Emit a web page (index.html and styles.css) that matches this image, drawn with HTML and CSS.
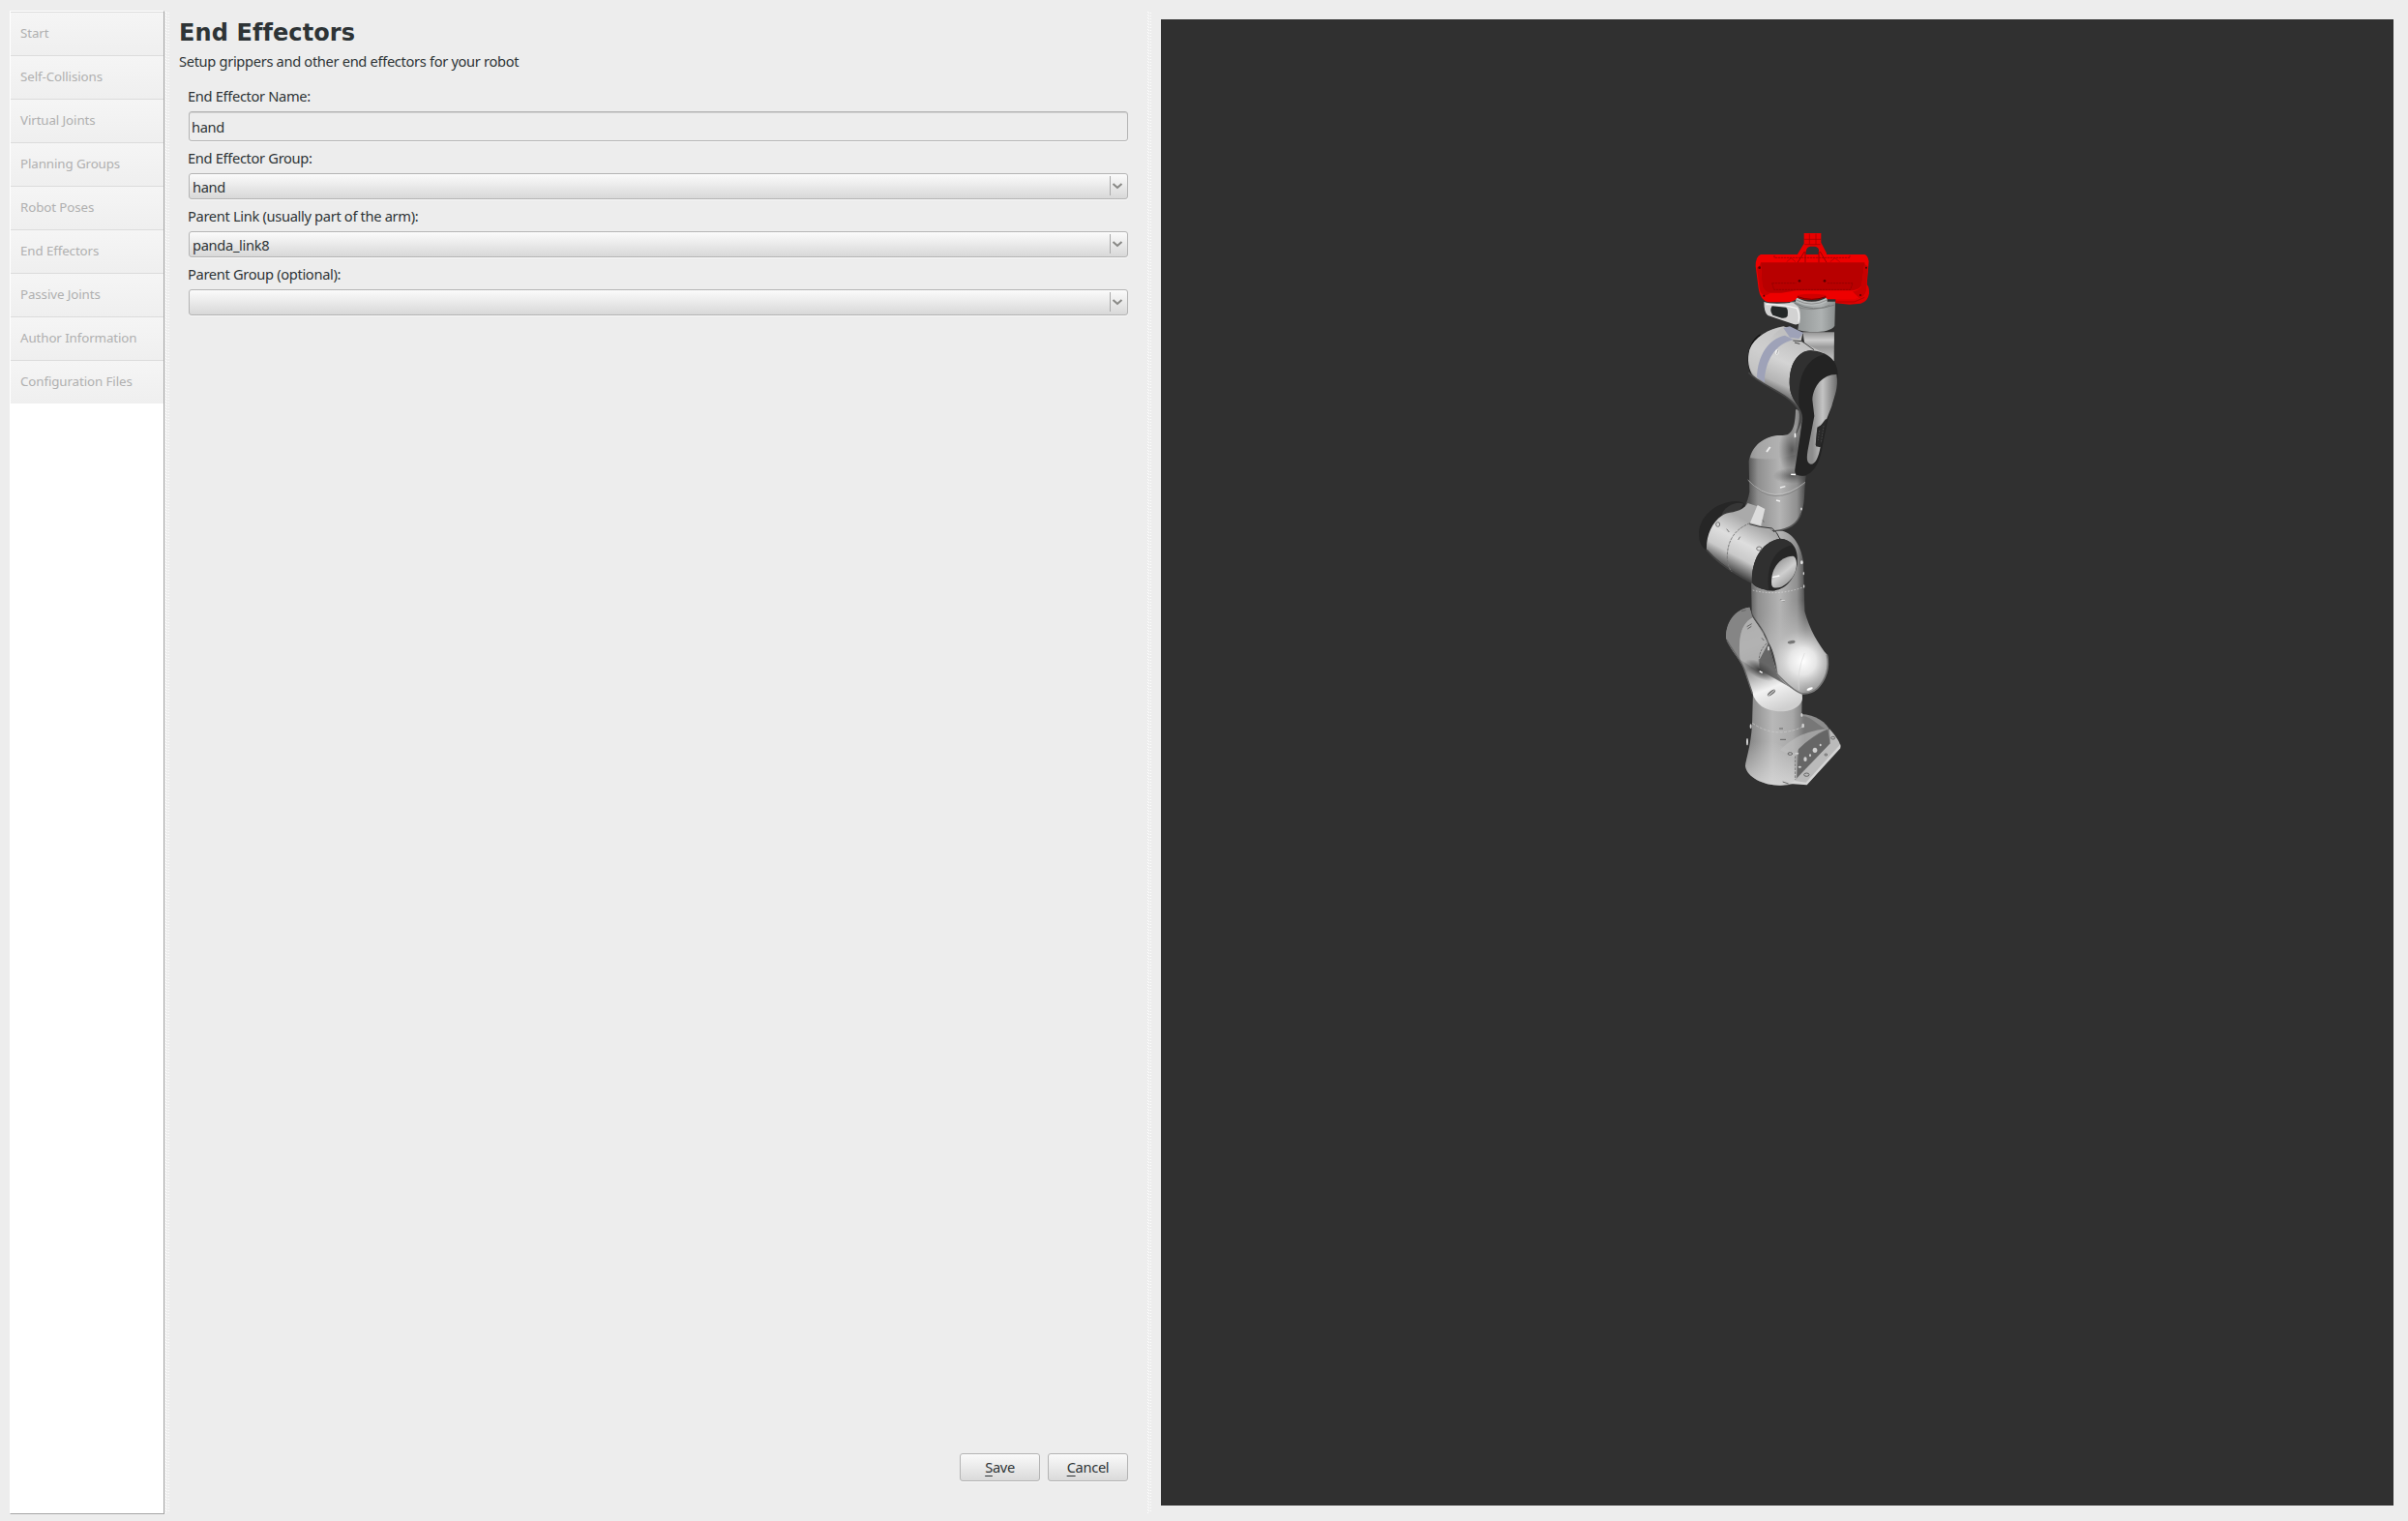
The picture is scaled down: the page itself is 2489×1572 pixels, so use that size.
FILE: index.html
```
<!DOCTYPE html>
<html lang="en">
<head>
<meta charset="utf-8">
<title>End Effectors</title>
<link rel="stylesheet" href="styles.css">
</head>
<body>
<div class="window">
  <nav class="steps">
    <div class="step"><span>Start</span></div>
    <div class="step"><span>Self-Collisions</span></div>
    <div class="step"><span>Virtual Joints</span></div>
    <div class="step"><span>Planning Groups</span></div>
    <div class="step"><span>Robot Poses</span></div>
    <div class="step"><span>End Effectors</span></div>
    <div class="step"><span>Passive Joints</span></div>
    <div class="step"><span>Author Information</span></div>
    <div class="step"><span>Configuration Files</span></div>
  </nav>
  <svg class="splitter" width="5" height="1552"><defs><pattern id="grip" width="5" height="3" patternUnits="userSpaceOnUse"><path d="M0 0h1v1h-1zM1 1h1v1h-1zM3 1h1v1h-1z" fill="#fff"/></pattern></defs><rect width="5" height="1552" fill="url(#grip)"/></svg>
  <main class="panel">
    <h1>End Effectors</h1>
    <p class="intro">Setup grippers and other end effectors for your robot</p>
    <form class="form">
      <label>End Effector Name:</label>
      <div class="field">hand</div>
      <label>End Effector Group:</label>
      <div class="combo"><span>hand</span><svg width="18" height="21"><path d="M.5 0v20" stroke="#aaa"/><path d="M3.5 8L8 12L12.5 8" fill="none" stroke="#888885" stroke-width="2"/></svg></div>
      <label>Parent Link (usually part of the arm):</label>
      <div class="combo"><span>panda_link8</span><svg width="18" height="21"><path d="M.5 0v20" stroke="#aaa"/><path d="M3.5 8L8 12L12.5 8" fill="none" stroke="#888885" stroke-width="2"/></svg></div>
      <label>Parent Group (optional):</label>
      <div class="combo"><span></span><svg width="18" height="21"><path d="M.5 0v20" stroke="#aaa"/><path d="M3.5 8L8 12L12.5 8" fill="none" stroke="#888885" stroke-width="2"/></svg></div>
    </form>
    <div class="actions">
      <div class="button"><span><u>S</u>ave</span></div>
      <div class="button"><span><u>C</u>ancel</span></div>
    </div>
  </main>
  <svg class="splitter" width="5" height="1552"><rect width="5" height="1552" fill="url(#grip)"/></svg>
  <section class="view">
    <svg class="robot" width="220" height="610" viewBox="0 0 660 1830">
      <defs>
        <linearGradient id="tube" x1="205" x2="378" y1="0" y2="0" gradientUnits="userSpaceOnUse"><stop offset="0" stop-color="#5c5c5c"/><stop offset=".15" stop-color="#8f8f8f"/><stop offset=".55" stop-color="#b4b4b4"/><stop offset=".85" stop-color="#909090"/><stop offset="1" stop-color="#4c4c4c"/></linearGradient>
        <linearGradient id="col" x1="195" x2="375" y1="0" y2="0" gradientUnits="userSpaceOnUse"><stop offset="0" stop-color="#808080"/><stop offset=".45" stop-color="#b8b8b8"/><stop offset=".8" stop-color="#a8a8a8"/><stop offset="1" stop-color="#777"/></linearGradient>
        <linearGradient id="foot" x1="0" x2="0" y1="470" y2="605" gradientUnits="userSpaceOnUse"><stop offset="0" stop-color="#ddd" stop-opacity="0"/><stop offset="1" stop-color="#ddd" stop-opacity=".75"/></linearGradient>
        <radialGradient id="elbow" cx="370" cy="220" r="190" gradientUnits="userSpaceOnUse"><stop offset="0" stop-color="#fff"/><stop offset=".22" stop-color="#e6e6e6"/><stop offset=".5" stop-color="#bdbdbd" stop-opacity=".7"/><stop offset="1" stop-color="#aaa" stop-opacity="0"/></radialGradient>
        <linearGradient id="shoulder" x1="170" x2="290" y1="60" y2="375" gradientUnits="userSpaceOnUse"><stop offset="0" stop-color="#929292"/><stop offset=".35" stop-color="#a9a9a9"/><stop offset=".55" stop-color="#8c8c8c"/><stop offset=".78" stop-color="#f2f2f2"/><stop offset="1" stop-color="#cfcfcf"/></linearGradient>
        <linearGradient id="fore" x1="215" x2="140" y1="335" y2="475" gradientUnits="userSpaceOnUse"><stop offset="0" stop-color="#aaa"/><stop offset=".4" stop-color="#dedede"/><stop offset=".7" stop-color="#c9c9c9"/><stop offset="1" stop-color="#4a4a4a"/></linearGradient>
        <linearGradient id="wrist" x1="330" x2="250" y1="385" y2="560" gradientUnits="userSpaceOnUse"><stop offset="0" stop-color="#c0c0c0"/><stop offset=".4" stop-color="#d4d4d4"/><stop offset=".75" stop-color="#b4b4b4"/><stop offset="1" stop-color="#4a4a4a"/></linearGradient>
        <linearGradient id="end" x1="400" x2="480" y1="0" y2="0" gradientUnits="userSpaceOnUse"><stop offset="0" stop-color="#8c8c8c"/><stop offset=".4" stop-color="#c4c4c4"/><stop offset="1" stop-color="#666"/></linearGradient>
        <linearGradient id="flange" x1="330" x2="470" y1="0" y2="0" gradientUnits="userSpaceOnUse"><stop offset="0" stop-color="#8b8f8f"/><stop offset=".7" stop-color="#aeb2b2"/><stop offset="1" stop-color="#8b8f8f"/></linearGradient>
        <linearGradient id="cap" x1="285" x2="350" y1="440" y2="520" gradientUnits="userSpaceOnUse"><stop offset="0" stop-color="#8b8b8b"/><stop offset=".5" stop-color="#cfcfcf"/><stop offset="1" stop-color="#8b8b8b"/></linearGradient>
        <linearGradient id="neck" x1="0" x2="0" y1="365" y2="450" gradientUnits="userSpaceOnUse"><stop offset="0" stop-color="#888"/><stop offset=".35" stop-color="#ccc"/><stop offset=".6" stop-color="#999"/><stop offset="1" stop-color="#bbb"/></linearGradient>
        <radialGradient id="shade"><stop offset="0" stop-color="#222" stop-opacity=".85"/><stop offset="1" stop-color="#333" stop-opacity="0"/></radialGradient>
      </defs>
      <!-- base and shoulder -->
      <g transform="translate(0 1170)">
        <path d="M365 384C410 386 445 410 455 437L455 472L352 585L320 540Z" fill="#8d8d8d"/>
        <path d="M216 315L213 420C209 480 195 520 192 545C198 580 245 604 300 605C325 605 340 600 350 596L352 510L357 493C390 465 425 445 450 432C425 430 400 390 367 390L368 315Z" fill="url(#col)"/>
        <path d="M213 440C209 485 195 520 192 545C198 580 245 604 300 605L350 596L352 510L300 480Z" fill="url(#foot)"/>
        <path d="M300 495C330 465 375 435 449 430C410 445 380 470 357 493L345 520Z" fill="#c0c0c0" opacity=".6"/>
        <path d="M357 493C380 470 420 443 448 432L455 475L352 583Z" fill="#666"/>
        <path d="M347 588L455 475L453 430Q487 468 487 485L383 602L347 596Z" fill="#bababa"/>
        <path d="M487 478V490L383 604L330 600L345 591L380 596Z" fill="#d5d5d5"/>
        <path d="M347 514V588" stroke="#777" stroke-width="3" stroke-dasharray="8 4"/>
        <path d="M214 412Q285 462 369 424" fill="none" stroke="#ccc" stroke-width="2" stroke-dasharray="9 4"/>
        <g fill="#d0d0d0"><ellipse cx="378" cy="524" rx="5" ry="7"/><ellipse cx="408" cy="496" rx="7" ry="8"/><ellipse cx="425" cy="480" rx="3" ry="4"/><ellipse cx="361" cy="548" rx="5" ry="3"/><ellipse cx="393" cy="512" rx="3" ry="4"/><ellipse cx="198" cy="470" rx="3" ry="11"/><ellipse cx="209" cy="422" rx="3" ry="7"/><ellipse cx="371" cy="420" rx="4" ry="7"/><ellipse cx="367" cy="387" rx="3" ry="6"/><ellipse cx="352" cy="506" rx="6" ry="3"/></g>
        <g fill="none" stroke="#666" stroke-width="3"><ellipse cx="382" cy="572" rx="8" ry="5"/><ellipse cx="464" cy="458" rx="6" ry="4"/><ellipse cx="442" cy="510" rx="4" ry="3"/><ellipse cx="331" cy="507" rx="7" ry="4"/><path d="M300 463h18M297 429h12M308 594l18 6"/></g>
        <path d="M205 53C155 60 130 110 133 150C150 195 180 215 192 255C205 295 212 310 218 330C235 365 265 376 310 376C345 374 369 352 369 335L368 318L292 262L262 160L213 80Z" fill="url(#shoulder)"/>
        <path d="M133 150C128 105 158 58 205 53L215 85C185 100 168 135 176 215C160 190 145 180 133 150Z" fill="#858585"/>
        <path d="M176 215C168 135 185 100 215 85L248 130L262 180L300 280L235 252Z" fill="#b5b5b5" opacity=".75"/>
        <path d="M135 155C155 195 182 215 193 257L214 320" fill="none" stroke="#666" stroke-width="4"/>
        <ellipse cx="238" cy="248" rx="55" ry="25" fill="url(#shade)" transform="rotate(28 238 248)"/>
        <path d="M263 165L236 215Q232 248 246 253L365 320L292 265Z" fill="#484848" opacity=".7"/>
        <path d="M258 165Q232 190 235 225" fill="none" stroke="#555" stroke-width="2" stroke-dasharray="8 3"/>
        <ellipse cx="273" cy="318" rx="15" ry="6" fill="#777" transform="rotate(-38 273 318)"/>
        <path d="M262 328L284 309" stroke="#ddd" stroke-width="3"/>
        <g stroke="#666" stroke-width="3"><path d="M197 113l15-9M199 120l12-8M180 65l14-3M243 148l7 8"/></g>
        <path d="M264 175v12M236 251l9 5" stroke="#fff" stroke-width="4"/>
      </g>
      <!-- upper arm -->
      <path d="M285 985C330 980 362 1020 372 1080L376 1235C390 1290 420 1340 447 1372C455 1412 440 1450 415 1475C400 1488 380 1492 365 1490C330 1475 305 1450 290 1430C286 1380 275 1345 262 1330C245 1280 220 1265 212 1240L210 1130Z" fill="url(#tube)"/>
      <g transform="translate(0 1170)">
        <path d="M210 -30L375 -30L376 65C390 120 420 170 447 202C455 242 440 280 415 305C400 318 380 322 365 320C330 305 305 280 290 260C286 210 275 175 262 160C245 110 220 95 212 70Z" fill="url(#elbow)"/>
        <path d="M445 200C455 242 440 280 415 305C400 318 380 322 365 320" fill="none" stroke="#777" stroke-width="5"/>
        <path d="M212 70C218 95 245 110 262 160C275 190 286 215 291 260C315 285 340 310 365 320" fill="none" stroke="#555" stroke-width="4" opacity=".7"/>
        <path d="M376 195Q352 250 358 310" fill="none" stroke="#d8d8d8" stroke-width="2"/>
        <ellipse cx="335" cy="161" rx="12" ry="5" fill="#777" transform="rotate(-10 335 161)"/>
        <ellipse cx="392" cy="306" rx="10" ry="4" fill="#fff" transform="rotate(-20 392 306)"/>
        <path d="M300 30l14 4M258 1h26" stroke="#777" stroke-width="4"/>
      </g>
      <path d="M215 1170Q290 1190 374 1160" fill="none" stroke="#ddd" stroke-width="2" stroke-dasharray="5 5"/>
      <g fill="#ddd"><ellipse cx="367" cy="1084" rx="4" ry="6"/><ellipse cx="373" cy="1118" rx="2" ry="5"/><ellipse cx="374" cy="1158" rx="2" ry="5"/><ellipse cx="308" cy="1202" rx="8" ry="2"/></g>
      <!-- forearm and elbow drum -->
      <g transform="translate(0 630)">
        <path d="M348 -20L372 -20L350 183L380 186L378 200L375 250C372 310 350 352 285 356L240 345L160 330C185 295 200 270 205 235L203 140C212 90 255 58 305 60C335 62 347 40 348 -20Z" fill="url(#tube)"/>
        <path d="M207 130C215 88 258 60 305 60C335 65 344 50 349 25L347 120Q280 140 207 130Z" fill="#b0b0b0" opacity=".65"/>
        <ellipse cx="337" cy="105" rx="42" ry="75" fill="url(#shade)" opacity=".7"/>
        <ellipse cx="338" cy="185" rx="60" ry="25" fill="url(#shade)" opacity=".6"/>
        <path d="M200 198Q280 285 378 205" fill="none" stroke="#ccc" stroke-width="2"/>
        <path d="M203 202Q280 289 377 210" fill="none" stroke="#777" stroke-width="2"/>
        <path d="M258 111L269 96" stroke="#eee" stroke-width="6"/><path d="M300 222l16-4M334 181l14 1M288 261l12 3M366 292v-8M346 55v12" stroke="#eee" stroke-width="4"/>
        <path d="M285 356C330 352 355 335 365 300" fill="none" stroke="#555" stroke-width="4"/>
        <path d="M70 415C40 395 38 335 80 298C110 268 165 255 188 270L200 300L140 440Z" fill="#262626"/>
        <path d="M118 308C125 280 165 262 187 272L172 296Z" fill="#363636"/>
        <path d="M72 415C70 370 90 325 125 305C150 295 180 300 200 270L245 285L250 300L243 341C280 350 290 368 300 385L213 517C160 490 105 450 72 415Z" fill="url(#fore)"/>
        <path d="M72 415C105 455 160 490 213 517" fill="none" stroke="#444" stroke-width="5"/>
        <path d="M230 276L253 288L240 340L207 331Z" fill="#dcdcdc"/>
        <path d="M207 332Q135 360 136 440Q138 470 150 482" fill="none" stroke="#777" stroke-width="3" stroke-dasharray="9 3"/>
        <path d="M205 335Q235 345 275 348Q290 358 300 382" fill="none" stroke="#333" stroke-width="3"/>
        <path d="M213 516C210 450 240 390 300 380C340 385 357 410 353 460C345 510 310 545 270 541C245 538 220 530 213 516Z" fill="#262626"/>
        <path d="M213 516C210 450 240 390 300 380C320 381 330 388 340 400C280 410 255 470 265 540C245 538 220 530 213 516Z" fill="#303030"/>
        <path d="M274 525C268 480 295 435 340 434C353 438 353 465 347 482C335 515 300 540 278 531Z" fill="url(#cap)"/>
        <path d="M276 500l22-5" stroke="#fff" stroke-width="4"/>
        <g fill="none" stroke="#777" stroke-width="3"><ellipse cx="235" cy="411" rx="8" ry="6"/><ellipse cx="107" cy="336" rx="6" ry="7"/><path d="M134 350l8 10M170 384l6-10M246 322l4 8"/></g>
      </g>
      <!-- wrist -->
      <path d="M370 370H468L467 460L380 430Z" fill="url(#neck)"/>
      <path d="M210 500C190 460 200 395 240 375L215 450Z" fill="#111"/>
      <path d="M345 700C352 670 365 640 358 615C345 575 290 555 225 515C198 490 198 450 205 425C220 385 265 360 310 352L370 372L365 398L440 437L370 640Z" fill="url(#wrist)"/>
      <path d="M202 495C245 540 330 560 358 612" fill="none" stroke="#444" stroke-width="5"/>
      <path d="M205 425C220 385 265 360 310 354Q245 390 232 515Q195 490 205 425Z" fill="#ccc" opacity=".6"/>
      <path d="M228 510C230 445 262 390 315 380L342 393C285 405 252 460 252 526Z" fill="#9ea2b8"/>
      <path d="M310 357L330 352L372 372L358 390L330 386Z" fill="#9ea2b8"/>
      <path d="M340 396L368 398L405 425M345 402l16 4" fill="none" stroke="#444" stroke-width="3"/>
      <ellipse cx="290" cy="432" rx="6" ry="8" fill="#eee"/><path d="M293 426l-3 12" stroke="#888" stroke-width="2"/>
      <path d="M330 540C325 470 355 428 395 427C450 430 480 460 479 505L470 570L448 640L432 720C425 770 405 812 370 815C352 815 344 810 346 795L370 640C370 600 335 590 330 540Z" fill="#232323"/>
      <path d="M330 540C325 470 355 428 395 427L440 438C375 450 350 520 360 605C345 580 333 570 330 540Z" fill="#303030"/>
      <path d="M400 580C402 535 435 500 475 501C482 540 468 570 460 600L440 650L415 665L410 720L425 725C420 755 410 780 395 779C380 775 383 755 386 735L406 630Z" fill="url(#end)"/>
      <path d="M441 640L428 656L414 678L411 724L425 727L446 640Z" fill="#292929"/>
      <path d="M435 660l-8 54M422 675l-4 30" stroke="#484848" stroke-width="3" stroke-dasharray="5 4"/>
      <path d="M347 683v12M334 811h14" stroke="#fff" stroke-width="4"/>
      <!-- flange -->
      <path d="M330 275H471L469 350C455 375 380 372 355 362L358 340Z" fill="url(#flange)"/>
      <path d="M345 280Q400 310 470 285" fill="none" stroke="#777b7b" stroke-width="3"/>
      <path d="M350 262Q398 290 446 262L446 276Q398 300 348 276Z" fill="#b8bcbc"/>
      <path d="M350 270Q398 295 446 270M340 287Q400 312 455 285" fill="none" stroke="#777" stroke-width="2"/>
      <path d="M250 276Q275 285 340 278L357 292Q366 310 361 342Q350 350 335 343L262 318Q250 310 250 276Z" fill="#d2d2d2"/>
      <path d="M256 284Q300 282 352 296Q362 315 357 338" fill="none" stroke="#f2f2f2" stroke-width="4"/>
      <path d="M275 289L318 293Q326 296 323 320Q319 328 305 326L277 317Q266 303 275 289Z" fill="#242828"/>
      <!-- hand -->
      <path d="M560 217Q578 222 576 250Q572 276 550 281L515 284L472 280V266H540Z" fill="#e00000"/>
      <path d="M475 276H530L562 262" fill="none" stroke="#900" stroke-width="2"/>
      <path d="M374 63H427V92L444 125V155H420V115Q418 104 405 104H394Q382 105 380 120L376 155H354V128L374 95Z" fill="#e80000"/>
      <path d="M374 82H427M376 98H425M391 65V98M411 65V98" stroke="#900" stroke-width="2"/>
      <path d="M240 129H562Q572 132 575 150L567 245Q563 265 530 268H446Q440 255 398 257L352 264Q345 276 320 277H262Q238 270 233 235L224 165Q224 135 240 129Z" fill="#ee0000"/>
      <path d="M240 154H562L553 225Q545 238 525 241H350L305 248H262Q248 240 244 225Z" fill="#b80000"/>
      <path d="M228 170Q238 166 240 154L245 228Q255 246 270 248Q243 268 236 235ZM572 165Q563 163 562 154L552 228Q545 240 525 244L545 264Q563 260 567 242Z" fill="#c80000"/>
      <path d="M282 132V139H516V132M275 218L281 238H518L525 218H446M275 218H350" fill="none" stroke="#850000" stroke-width="2" stroke-dasharray="7 2"/>
      <path d="M320 152l14-12 14 12M455 152l15-12 15 12" fill="none" stroke="#a00000" stroke-width="2"/>
      <path d="M354 154L376 120M444 154L424 120M378 120V154M420 120V154" stroke="#900" stroke-width="3"/>
      <path d="M354 255Q398 248 442 255V262Q398 278 352 263Z" fill="#d00000"/><path d="M354 260Q398 276 442 260" fill="none" stroke="#700" stroke-width="3"/>
      <g fill="#500"><circle cx="360" cy="211" r="4"/><circle cx="438" cy="211" r="4"/><circle cx="236" cy="170" r="4"/><circle cx="567" cy="170" r="3"/><circle cx="250" cy="257" r="3"/><circle cx="549" cy="255" r="3"/></g>
    </svg>
  </section>
</div>
</body>
</html>
```
FILE: styles.css
```
body {
  margin: 0;
  background: #ededed;
  color: #2e3436;
  font-family: "Noto Sans", sans-serif;
  font-size: 14.67px;
  letter-spacing: -0.33px;
}

.window {
  display: flex;
  width: 2489px;
  height: 1572px;
  overflow: hidden;
  box-sizing: border-box;
  padding: 11px 15px 7px 10px;
}

.steps {
  width: 158px;
  height: 1552px;
  flex: none;
  background: #fff;
  border: 1px solid #fff;
  border-right-color: #a5a5a5;
  border-bottom-color: #a5a5a5;
}

.step {
  height: 45px;
  box-sizing: border-box;
  display: flex;
  align-items: center;
  border-top: 1px solid #dcdcdc;
  padding: 0 0 3px 10px;
  background: linear-gradient(#f5f5f5, #efefef);
  color: #b0b0b0;
  font-size: 13.33px;
  letter-spacing: -0.1px;
}

.splitter {
  flex: none;
  display: block;
  margin: 1px 0 0 1px;
}

.panel {
  width: 981px;
  flex: none;
  margin: 0 19px 0 9px;
  display: flex;
  flex-direction: column;
}

h1 {
  margin: 7px 0 0;
  height: 33px;
  font: bold 24px/33px "DejaVu Sans", sans-serif;
  letter-spacing: 0.1px;
}

.intro {
  margin: 2px 0 0;
  line-height: 20px;
}

.form {
  margin: 16px 0 0 10px;
  width: 971px;
  display: flex;
  flex-direction: column;
}

label {
  height: 20px;
  line-height: 20px;
  margin: 1px 0 6px -1px;
}

.form > label:first-child {
  margin-top: 0;
}

.field,
.combo,
.button {
  box-sizing: border-box;
  border: 1px solid #b4b4b4;
  border-radius: 3px;
  box-shadow: 0 1px #f8f8f8;
}

.field {
  height: 31px;
  line-height: 30px;
  margin-bottom: 6px;
  padding-left: 2px;
  box-shadow: inset 0 1px #cfcfcf, 0 1px #f8f8f8;
}

.combo {
  height: 27px;
  margin-bottom: 6px;
  padding-left: 3px;
  display: flex;
  align-items: center;
  justify-content: space-between;
  background: linear-gradient(#fbfbfb, #d8d8d8);
}

.actions {
  margin-top: auto;
  margin-bottom: 34px;
  display: flex;
  gap: 8px;
  justify-content: flex-end;
}

.button {
  width: 83px;
  height: 29px;
  padding-bottom: 1px;
  display: flex;
  align-items: center;
  justify-content: center;
  background: linear-gradient(#fafafa, #dadada);
}

.button u {
  text-underline-offset: 3px;
}

.view {
  flex: 1;
  margin: 9px 0 9px 9px;
  padding: 200px 0 0 540px;
  background: #303030;
}

.robot {
  display: block;
}
```
